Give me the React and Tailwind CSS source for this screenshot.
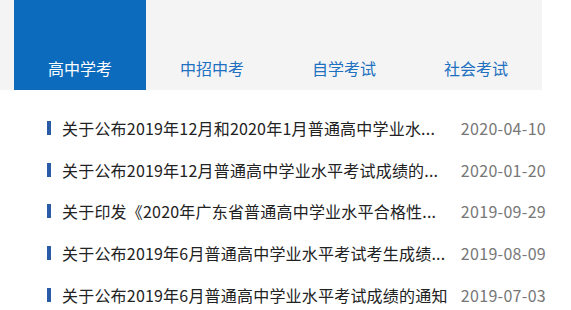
const tabs = ['高中学考', '中招中考', '自学考试', '社会考试'];

const news = [
  { title: '关于公布2019年12月和2020年1月普通高中学业水...', date: '2020-04-10' },
  { title: '关于公布2019年12月普通高中学业水平考试成绩的...', date: '2020-01-20' },
  { title: '关于印发《2020年广东省普通高中学业水平合格性...', date: '2019-09-29' },
  { title: '关于公布2019年6月普通高中学业水平考试考生成绩...', date: '2019-08-09' },
  { title: '关于公布2019年6月普通高中学业水平考试成绩的通知', date: '2019-07-03' },
];

export default function App() {
  return (
    <div className="w-[571px] h-[310px] bg-white font-['Noto_Sans_CJK_SC',sans-serif] overflow-hidden">
      {/* 选项卡 */}
      <div className="w-[542px] h-[90px] bg-[#f4f4f4] flex pl-[14px]">
        {tabs.map((t, i) => (
          <div
            key={t}
            className={
              i === 0
                ? 'w-[132px] h-full flex items-end justify-center pb-[12px] bg-[#0c6bbd] text-white'
                : 'w-[132px] h-full flex items-end justify-center pb-[12px] text-[#2070c0]'
            }
          >
            <span className="text-[16px] leading-[20px]">{t}</span>
          </div>
        ))}
      </div>

      {/* 新闻列表 */}
      <ul className="mt-[17px] pl-[47px] w-[546px]">
        {news.map((n) => (
          <li key={n.date} className="h-[41.7px] flex items-center">
            <span className="w-[4px] h-[14px] bg-[#2a5ba6] shrink-0" />
            <span className="ml-[11px] whitespace-nowrap text-[16px] text-[#222] leading-[20px] tracking-[0.2px]">
              {n.title}
            </span>
            <span className="ml-auto whitespace-nowrap text-[16px] text-[#777] leading-[20px] tracking-[0.3px]">
              {n.date}
            </span>
          </li>
        ))}
      </ul>
    </div>
  );
}
